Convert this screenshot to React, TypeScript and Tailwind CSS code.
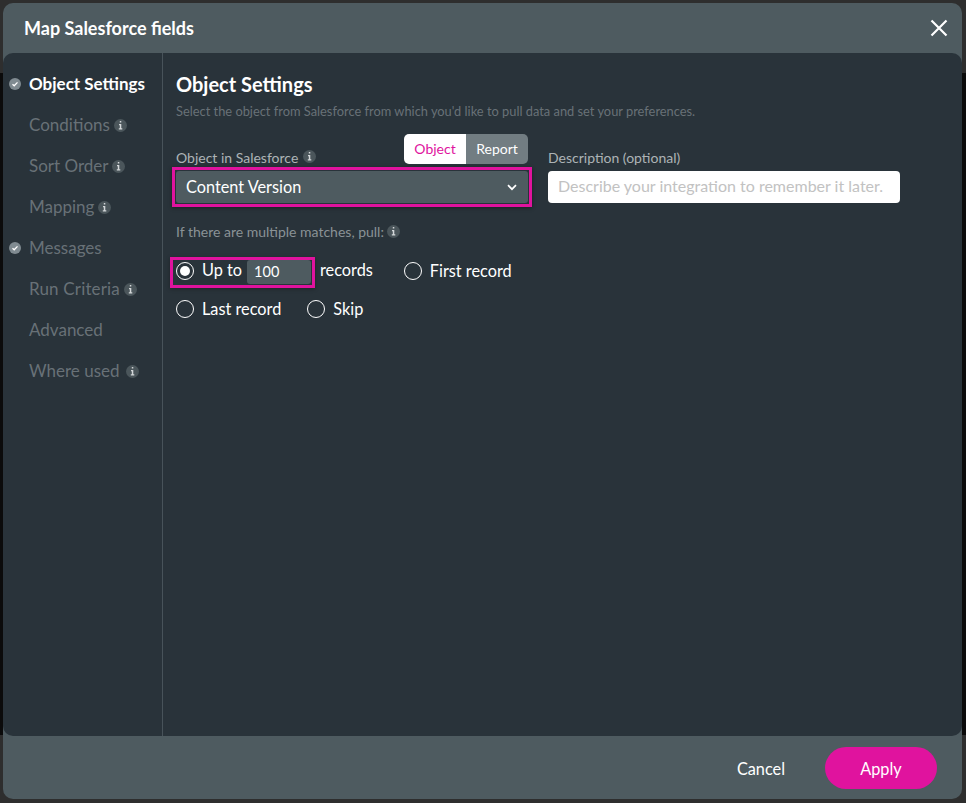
import React from "react";

function Info({ className = "" }: { className?: string }) {
  return (
    <span className={"inline-flex h-[13px] w-[13px] shrink-0 items-center justify-center rounded-full bg-[#4b565b] " + className}>
      <svg width="5" height="9" viewBox="0 0 5 9"><path d="M1.8 0h1.5v1.5H1.8z M1 3h2.3v4.2h1V8.5H.8V7.2h1V4.2H1z" fill="#d3d7d9" /></svg>
    </span>
  );
}

function Check() {
  return (
    <span className="flex h-3 w-3 items-center justify-center rounded-full bg-[#808b91]">
      <svg width="8" height="8" viewBox="0 0 8 8" fill="none"><path d="M1.5 4.2 3.2 5.8 6.5 2.4" stroke="#fff" strokeWidth="1.3" /></svg>
    </span>
  );
}

function Radio({ checked, className = "" }: { checked?: boolean; className?: string }) {
  return (
    <span className={"flex h-[18px] w-[18px] shrink-0 items-center justify-center rounded-full border border-white " + className}>
      {checked && <span className="h-[10px] w-[10px] rounded-full bg-white" />}
    </span>
  );
}

const nav: { label: string; check?: boolean; info?: boolean; active?: boolean; cls?: string; gap?: string }[] = [
  { label: "Object Settings", check: true, active: true },
  { label: "Conditions", info: true },
  { label: "Sort Order", info: true },
  { label: "Mapping", info: true },
  { label: "Messages", check: true },
  { label: "Run Criteria", info: true, cls: "tracking-[0.17px]" },
  { label: "Advanced" },
  { label: "Where used", info: true, gap: "ml-[7px]" },
];

export default function App() {
  return (
    <div className="h-[803px] w-[966px] overflow-hidden bg-[linear-gradient(#2e2e2e_73px,#0b0b0b_73px,#0b0b0b_735px,#2e2e2e_735px)] p-[3px] pr-1 font-['Lato','Noto_Sans',sans-serif]">
      <div className="flex h-[796px] w-[959px] flex-col overflow-hidden rounded-[10px] bg-[#4e5b60]">
        <header className="flex h-[50px] shrink-0 items-center justify-between pl-[21px] pr-[14px]">
          <h1 className="text-[18px] font-bold text-white">Map Salesforce fields</h1>
          <svg width="18" height="18" viewBox="0 0 18 18" fill="none"><path d="M1.5 1.5 16.5 16.5M16.5 1.5 1.5 16.5" stroke="#fff" strokeWidth="2.2" /></svg>
        </header>

        <div className="flex min-h-0 flex-1 rounded-[10px] bg-[#29333a]">
          <nav className="flex w-[160px] shrink-0 flex-col gap-[17px] border-r border-[#48535a] pt-[19px]">
            {nav.map((n) => (
              <div key={n.label} className="flex h-6 items-center">
                <span className="flex w-[26px] justify-end pr-2">{n.check && <Check />}</span>
                <span className={n.active ? "text-[17px] font-bold text-white" : "text-[17px] text-[#687177] " + (n.cls ?? "")}>{n.label}</span>
                {n.info && <Info className={n.gap ?? "ml-1"} />}
              </div>
            ))}
          </nav>

          <main className="flex-1 pl-[13px]">
            <h2 className="mt-[17px] text-[20px] font-bold leading-[28px] text-white">Object Settings</h2>
            <p className="mt-[5px] text-[12.85px] leading-4 text-[#687177]">Select the object from Salesforce from which you'd like to pull data and set your preferences.</p>

            <div className="mt-[15px] flex items-end">
              <div className="w-[352px]">
                <div className="flex items-end justify-between">
                  <span className="-mb-1 flex items-center gap-[5px] text-[14px] text-[#adb3b6]">
                    Object in Salesforce <Info className="mb-[3px]" />
                  </span>
                  <div className="flex h-[30px] overflow-hidden rounded-[5px] text-[14px]">
                    <span className="flex w-[62px] items-center justify-center bg-white pb-[2px] text-[#e0139e]">Object</span>
                    <span className="flex w-[62px] items-center justify-center bg-[#727d82] pb-[2px] text-white">Report</span>
                  </div>
                </div>
                <div className="-mx-1 mt-[3px] border-[3px] border-[#e0139e] p-px shadow-[0_1px_4px_rgba(0,0,0,0.4)]">
                  <div className="flex h-8 items-center justify-between rounded-[3px] bg-[#4e5b60] pl-[10px] pr-[11px] text-[16.3px] text-white">
                    Content Version
                    <svg width="10" height="7" viewBox="0 0 10 7" fill="none"><path d="M1 1.2 5 5.2l4-4" stroke="#fff" strokeWidth="1.7" /></svg>
                  </div>
                </div>
              </div>
              <div className="ml-[20px] mb-1">
                <div className="mb-[5px] text-[14px] leading-[17px] text-[#adb3b6]">Description (optional)</div>
                <input
                  readOnly
                  placeholder="Describe your integration to remember it later."
                  className="h-8 w-[352px] rounded-[4px] bg-white px-[10px] pb-[3px] text-[16px] outline-none placeholder:text-[#c2c2c2]"
                />
              </div>
            </div>

            <div className="mt-[15px] flex items-center gap-[3px] text-[14px] leading-5 text-[#8a9296]">
              If there are multiple matches, pull: <Info className="mb-[2px]" />
            </div>

            <div className="mt-[15px] flex items-start text-[16.3px] leading-[18px] text-white">
              <div className="-ml-[6px] flex h-[31px] w-[145px] shrink-0 items-start border-[3px] border-[#e0139e] pl-[3px] shadow-[0_1px_4px_rgba(0,0,0,0.3)]">
                <Radio checked className="mt-[2px]" />
                <span className="ml-2 mt-[1px] whitespace-nowrap">Up to</span>
                <span className="ml-[5px] flex h-6 w-16 items-center rounded-[3px] bg-[#4e5b60] pl-[7px] text-[14.5px]">100</span>
              </div>
              <span className="ml-[5px] mt-[4px]">records</span>
              <span className="ml-[31px] mt-[4px] flex items-center gap-2"><Radio className="mt-[1px]" /> First record</span>
            </div>

            <div className="mt-[11px] flex items-center text-[16.3px] leading-[18px] text-white">
              <span className="flex items-center gap-2"><Radio /> <span className="mt-[1px]">Last record</span></span>
              <span className="ml-[26px] flex items-center gap-2"><Radio /> <span className="mt-[1px]">Skip</span></span>
            </div>
          </main>
        </div>

        <footer className="flex h-[63px] shrink-0 items-center justify-end pr-[25px]">
          <span className="mr-10 mt-[3px] text-[16.3px] text-white">Cancel</span>
          <button className="flex h-[42px] w-[112px] items-center justify-center rounded-full bg-[#e0139e] pt-[4px] text-[16.3px] text-white">Apply</button>
        </footer>
      </div>
    </div>
  );
}
